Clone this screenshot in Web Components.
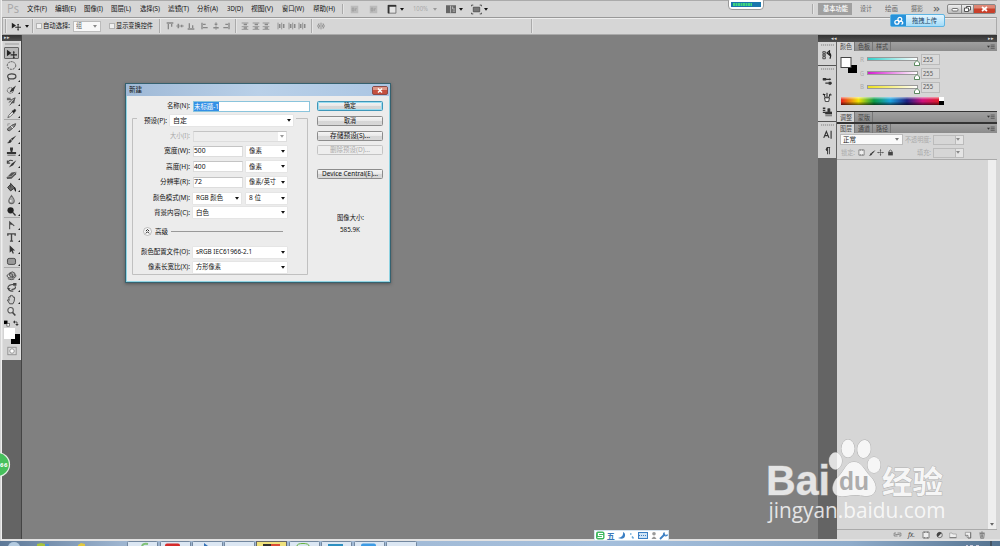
<!DOCTYPE html>
<html>
<head>
<meta charset="utf-8">
<title>Ps</title>
<style>
html,body{margin:0;width:1000px;height:546px;overflow:hidden;background:#808080}
body{font:6.4px/10px "Noto Sans","Noto Sans CJK SC",sans-serif;color:#222}
</style>
</head>
<body>
<ps-app></ps-app>
<script>
const def=(name,css,html,after)=>customElements.define(name,class extends HTMLElement{
  connectedCallback(){
    if(this.shadowRoot)return;
    this.attachShadow({mode:'open'}).innerHTML='<style>*{box-sizing:border-box}'+css+'</style>'+(typeof html==='function'?html(this):html);
    if(after)after(this);
  }
});
const G='fill="none" stroke="#444" stroke-width="1"';
const I={
 move:'<path d="M1 2v7l5-3.5z" fill="#222"/><path d="M8.5 4v7M5 7.5h7" stroke="#222" stroke-width="1.1"/><path d="M7.3 4.8l1.2-1.6 1.2 1.6zM7.3 10.2l1.2 1.6 1.2-1.6z" fill="#222"/>',
 marquee:'<ellipse cx="6" cy="6" rx="4.6" ry="4.2" '+G+' stroke-width="1.2" stroke-dasharray="2.2 1"/>',
 lasso:'<ellipse cx="6.3" cy="4.8" rx="4.5" ry="2.8" fill="none" stroke="#444" stroke-width="1.3"/><path d="M3 6.5c-1.4 1 .8 1.6 0 3.2" fill="none" stroke="#444" stroke-width="1.3"/>',
 quick:'<ellipse cx="4.8" cy="7" rx="3.4" ry="3" '+G+' stroke-dasharray="1.2 .7"/><path d="M11 1.500L6 5.3 4 8.9 8 7.5z" fill="#333"/>',
 crop:'<path d="M1 4h5l4-2-2 4-4 4M1 2.5h4M3 7l3-2" '+G+'/><path d="M5 8l5-6-1 6z" fill="#555"/>',
 eye:'<path d="M2 10.5L3 8l4-4 1.5 1.5-4 4z" fill="#eee" stroke="#444" stroke-width=".8"/><path d="M6.5 3.2l1.2-.3 1.4-1.6q2 0 1.5 1.9L9 4.8l-.3 1z" fill="#222" stroke="#222" stroke-width=".5"/>',
 heal:'<path d="M1.5 7.5l5-4q2-1 4-1.7-.4 2.6-2 4L4 9.5q-2.5.5-2.5-2z" fill="#888" stroke="#444"/><path d="M5.500 4l2.500 3" stroke="#fff"/><path d="M2 2h3M2 2v3" stroke="#888" stroke-dasharray="1 .5"/>',
 brush:'<path d="M11.3 1.500L5.4 5.2l1.4 2z" fill="#333"/><path d="M5 5.6l1.5 1.9Q5 10.7 1 9.9q2-.5 2.2-2.2Q3.8 6 5 5.6z" fill="#333"/>',
 stamp:'<path d="M4.400 1.500h3.200v2.300L7 5.600v1h4v2.200H1v-2.200h4v-1L4.400 4z" fill="#333"/><path d="M1.500 10h9" stroke="#555"/>',
 hist:'<path d="M11.300 2.500L6.400 6 3 10.300l4.800-2.300z" fill="#333"/><path d="M1.500 5.500q2-4.500 6-2.500M1.500 2.600v3h3" fill="none" stroke="#444" stroke-width="1.200"/>',
 eraser:'<path d="M1 8L6 2.800l5.300-.9-.3 2.600-5 5-5 .3z" fill="#555"/><path d="M1.600 7.400L6 7l4.700-4.600" fill="none" stroke="#ccc" stroke-width=".6"/>',
 bucket:'<path d="M5.5 2l4 4.400L5 9.700 1.800 6z" fill="#666" stroke="#333"/><path d="M9 5.300q2.500 1.500 1.900 5.200-1.300-.2-2.100-3z" fill="#222"/><path d="M5 6V1" fill="none" stroke="#444"/>',
 blur:'<path d="M6 1.600Q9.300 6 9 7.700A3 2.800 0 013 7.700Q2.800 6 6 1.600z" fill="#aaa" stroke="#666" stroke-width="1.100"/><circle cx="5.200" cy="7.500" r="1" fill="#eee"/>',
 dodge:'<circle cx="5" cy="4.700" r="3.400" fill="#222"/><path d="M7 6.700l3.400 3.700" stroke="#333" stroke-width="1.500"/>',
 pen:'<path d="M4 10V2l5 4.500M4 2.200l1.800 3.200" fill="none" stroke="#444" stroke-width="1.100"/>',
 type:'<path d="M2 4V2h8v2M6 2v8M4.300 10h3.400" fill="none" stroke="#444" stroke-width="1.500"/>',
 arrow:'<path d="M4 1.300v8.200l2-1.800 1.400 3 1.200-.7-1.300-2.800h2.600z" fill="#333"/>',
 rect:'<rect x="1.600" y="2.600" width="8.800" height="6.600" rx="1.800" fill="#999" stroke="#444"/>',
 rot:'<ellipse cx="6" cy="6.400" rx="4.800" ry="2.300" '+G+'/><path d="M4 3.300l3-1.300 2.600 1.400v3L7 8 4 6.500zM4 3.300l3 1.400v3" fill="#aaa" stroke="#444" stroke-width=".9"/><path d="M2 9.500q4 2 7 .2" '+G+'/>',
 cam:'<path d="M2 6q1-3.600 7-3.200M9.800 4.700q2 3-3.800 3.500M2 6.500q1 4 6 3.400" fill="none" stroke="#444" stroke-width="1.200"/><path d="M7.800 1h3.600v3H7.800zM1 6l4 1-2 2z" fill="#444"/>',
 hand:'<path d="M4 10.700L1.500 6.600q.6-1.200 2 .4L3 3.300q.7-1 1.500.3l.4-1.900q.9-.9 1.300.2L7.500 2l.6 1.700q1.400-.9 1.300.7-.1 3.800-1.800 6.300z" fill="#ccc" stroke="#444"/>',
 zoom:'<circle cx="5" cy="4.700" r="3" fill="#ddd" stroke="#555" stroke-width="1.200"/><path d="M7.200 7l3 3.300" stroke="#444" stroke-width="1.700"/>',
 mini:'<rect x="0" y="1" width="6" height="6" fill="#000"/><rect x="5" y="6" width="4.500" height="4.500" fill="#fff" stroke="#333"/>',
 swap:'<path d="M2 4h6v5" fill="none" stroke="#333" stroke-width="1.500"/><path d="M0 4l4-3.500v7zM8 12l-3.500-4h7z" fill="#333"/>',
 mask:'<rect x="1" y="1.500" width="10" height="9" fill="#ddd" stroke="#888"/><circle cx="6" cy="6" r="2.700" fill="#fff" stroke="#888"/>',
 br:'<path d="M1 1h10v10H1z" fill="#bbb"/><path d="M3 8V4h2v4H3M7 8V5h2" fill="none" stroke="#999"/>',
 lay:'<path d="M1.300 11V1.500h9.400V11z" fill="#e4e4e4" stroke="#666"/><path d="M1 2.200h10M2 2v9" stroke="#333" stroke-width="2"/>',
 docs:'<path d="M0 1.500h12v9.500H0z" fill="#666"/><path d="M5.500 2v8.500M8 3v3h3M8 8.500h3" stroke="#ccc" fill="none"/>',
 full:'<path d="M2.500 3.500h7v5h-7z" fill="#777" stroke="#444" stroke-width=".8"/><path d="M.5 2.500V1.200h2M9.500 1.200h2v1.300M.5 9.500v1.300h2M9.500 10.800h2V9.500" '+G+'/>',
 at:'<path d="M1 1.500h10M3.500 3v8M8.500 3v4" stroke="#888" stroke-width="2" fill="none"/>',
 am:'<path d="M0 6h12" stroke="#888"/><path d="M3.500 2.500v7M8.500 4v4" stroke="#888" stroke-width="2.400"/>',
 ab:'<path d="M1 10.500h10M3.500 2v7M8.500 5v4" stroke="#888" stroke-width="2"/>',
 al:'<path d="M1.500 1v10M3 3.500h4M3 8.500h7" stroke="#888" stroke-width="2"/>',
 ac:'<path d="M6 0v12" stroke="#888"/><path d="M4 3.500h4M2 8.500h8" stroke="#888" stroke-width="2.300"/>',
 ar:'<path d="M10.500 1v10M5 3.500h4M2 8.500h7" stroke="#888" stroke-width="2"/>',
 dv:'<path d="M1 1.500h10M1 7h10M1 11h10" stroke="#888" stroke-width="1.200"/><path d="M4 3.800h5M4 9h5" stroke="#888" stroke-width="2"/>',
 dh:'<path d="M1.500 1v10M7 1v10" stroke="#888" stroke-width="1.200"/><path d="M4 3v6M10 3v6" stroke="#888" stroke-width="2.400"/>',
 auto:'<path d="M6 1v10M3 2q-4 4 0 8M9 2q4 4 0 8M3.500 4v4M8.500 4v4" fill="none" stroke="#888" stroke-width="1.300"/>',
 dhist:'<path d="M1 2h3v2H1zM1 5h3v2H1zM1 8h3v2.500H1z" fill="none" stroke="#333"/><path d="M6 3.500L9 1v5zM8 3.500q4 1 1.500 7" fill="none" stroke="#222" stroke-width="1.400"/>',
 dbr:'<path d="M1 4h9M4 8.500h8" stroke="#333" stroke-width="1.300"/><path d="M1 2.500h4v3H1zM8 7h3v3.500H8zM9 2.500l2 1.500-2 1.500z" fill="#333"/>',
 dcl:'<path d="M3 7h6l-1 4.500H4z" fill="#eee" stroke="#222"/><path d="M4 7L2 2M6 7V1M8 7l2-5M1 3h3M8.500 3.500h3" stroke="#222" stroke-width="1.200"/>',
 dst:'<path d="M1 1.500h3M1 4h3M1 6.500h3" stroke="#333" stroke-width="1.600"/><path d="M7 2h2.500v4H12v2.500H4V6h3zM4 10.500h8" fill="#333" stroke="#333" stroke-width=".8"/>',
 chara:'<path d="M1 10.500L4.500 2l3.500 8.500M2.500 7.500h4M10.800 1v10.500" fill="none" stroke="#333" stroke-width="1.500"/>',
 para:'<path d="M6 1.500A2.800 2.800 0 006 7z" fill="#333"/><path d="M6 1.800V11M8.500 1.800V11M5 2h4.500" stroke="#333" stroke-width="1.200" fill="none"/>',
 ltr:'<path d="M1.500 1.500h9v9h-9z" fill="#eee" stroke="#555"/><path d="M4 1v2M8 1v2M4 9v2M8 9v2" stroke="#555"/>',
 cross:'<path d="M6 1v10M1 6h10" stroke="#444"/><path d="M4.500 2.500L6 .5l1.500 2zM4.500 9.500l1.500 2 1.500-2zM2.500 4.500L.5 6l2 1.500zM9.500 4.500l2 1.500-2 1.500z" fill="#444"/>',
 lock:'<path d="M2 5h8v6H2z" fill="#444"/><path d="M3.500 5V3.500q2.500-3.500 5 0V5" fill="none" stroke="#444" stroke-width="1.300"/>',
 link:'<path d="M4 4H1.500v4H6M6 4h4.500v4H8M3 6h6" fill="none" stroke="#777"/>',
 adj:'<circle cx="5.500" cy="6" r="4" fill="#ddd" stroke="#444"/><path d="M8.500 3A4 4 0 002.700 9z" fill="#444"/>',
 folder:'<path d="M1 10V3h3.500l1 1.500H11V10z" fill="#eee" stroke="#999"/><path d="M1 10h10" stroke="#555"/>',
 page:'<path d="M2 2h8v8.500H6L2 7z" fill="#eee" stroke="#888"/><path d="M6 10V6.500H2M10 2v8.500H6" fill="none" stroke="#555"/>',
 bin:'<path d="M3 4h6.500l-1 7H4z" fill="#ddd" stroke="#666"/><path d="M2 3h8M5 1.500h2M5.500 5v5M7 5v5" stroke="#555"/>',
 adv:'<circle cx="6" cy="6" r="5.300" fill="#f8f8f8" stroke="#999" stroke-width=".8"/><path d="M3.800 5.500L6 3.300l2.200 2.200M3.800 8.500L6 6.300l2.200 2.200" fill="none" stroke="#222" stroke-width="1.300"/>',
 menu:'<path d="M0 4h4.500L2.200 7z" fill="#333"/><path d="M5.500 3h6M5.500 5.500h6M5.500 8h6" stroke="#444"/>',
 cloud:'<ellipse cx="3.500" cy="7.500" rx="2.500" ry="2.300" fill="none" stroke="#fff" stroke-width="1.500"/><circle cx="7" cy="4" r="2.300" fill="none" stroke="#fff" stroke-width="1.500"/><path d="M5.500 7.500q3-2.500 4.500-.5t-1 3" fill="none" stroke="#fff" stroke-width="1.500"/>'
};
def('ps-icon',':host{display:block;flex:none}svg{display:block;width:100%;height:100%}',e=>{
  const s=e.getAttribute('s')||9;e.style.width=e.style.height=s+'px';
  return `<svg viewBox="0 0 12 12">${I[e.getAttribute('n')]}</svg>`});
/* Label with its text squeezed or stretched to the width w */
def('ps-text',':host{display:block;flex:none;white-space:nowrap;line-height:10px}span{display:inline-block;transform-origin:0 50%}','<span><slot></slot></span>',e=>{
  const w=+e.getAttribute('w'),s=e.shadowRoot.querySelector('span');
  s.textContent=e.textContent;
  if(w){e.style.width=w+'px';const r=s.getBoundingClientRect().width;if(r)s.style.transform=`scaleX(${w/r})`}});
def('ps-caret',':host{display:block;flex:none;width:4px;height:3px}svg{display:block}','<svg width="4" height="3"><path d="M0 0h4L2 2.700z" style="fill:var(--c,#111)"/></svg>');
def('ps-sep',':host{display:block;flex:none;width:1px;height:var(--h,12px);background:#aaa;box-shadow:1px 0 #e4e4e4}','');
def('ps-check',':host{display:block;flex:none;width:6px;height:6px;background:#f0f0f0;border:1px solid #b4b4b4;box-sizing:border-box}','');
/* A line of items, each preceded by its gap */
const gap=n=>`<i style="flex:none;width:${n}px"></i>`;
const line=a=>{let x=a.shift(),h='';for(const [p,w,m] of a){h+=gap(p-x)+m;x=p+w}return h};
const T=(p,w,t,st='')=>[p,w,`<ps-text w="${w}" style="${st}">${t}</ps-text>`];
const C=(p,c='#111')=>[p-2,4,`<ps-caret style="--c:${c}"></ps-caret>`];
const S=(p,h=12)=>[p,1,`<ps-sep style="--h:${h}px"></ps-sep>`];
const N=(p,s,n,st='')=>[p,s,`<ps-icon n="${n}" s="${s}" style="${st}"></ps-icon>`];

def('ps-window-buttons',`:host{display:flex;flex:none;width:49px;height:10px;border:1px solid #888;border-radius:2px;background:linear-gradient(#eee,#bbb);overflow:hidden;box-sizing:border-box}
svg{display:block}`,`<svg width="47" height="8" viewBox="0 0 47 8"><path d="M26 0h21v8H26z" fill="#c9402b"/><path d="M26 0h21v3.500H26z" fill="#de8775"/><path d="M13.500 0v8M25.500 0v8" stroke="#888"/><rect x="4" y="3.500" width="6" height="2.500" rx="1" fill="#fff" stroke="#555" stroke-width=".8"/><path d="M18.500 3V1.500h4v3.500h-1.500M16.500 3h4v3.500h-4z" fill="#fff" stroke="#444" stroke-width=".9"/><path d="M34 2l5 4M39 2l-5 4" stroke="#fff" stroke-width="1.700"/></svg>`);
def('ps-menubar',':host{display:flex;align-items:center;height:17px;background:#d6d6d6;border-top:1px solid #aaa;box-sizing:border-box;color:#111}b{display:flex;align-items:center;justify-content:center;width:34px;height:12px;background:#a0a0a0;color:#fff;font-weight:500;flex:none}',
 line([2,T(7,12,'Ps','color:#aaa;font-size:12px;line-height:14px'),
 T(27,20,'文件(F)'),T(55,21,'编辑(E)'),T(84,19,'图像(I)'),T(111,20,'图层(L)'),T(140,20,'选择(S)'),T(168,21,'滤镜(T)'),T(197,21,'分析(A)'),T(227,16,'3D(D)'),T(251,22,'视图(V)'),T(282,22,'窗口(W)'),T(313,22,'帮助(H)'),
 S(342,10),N(350,9,'br'),N(369,9,'br'),N(387,10,'lay'),C(402),T(413,15,'100%','color:#aaa'),C(435,'#999'),N(446,10,'docs'),C(461),N(471,11,'full'),C(486),
 S(812,10),[818,34,'<b><ps-text w="25">基本功能</ps-text></b>'],T(860,12,'设计','color:#666'),T(885,13,'绘画','color:#666'),T(911,12,'摄影','color:#666'),T(933,7,'»','color:#666;font-size:11px;margin-top:-2px'),[947,49,'<ps-window-buttons></ps-window-buttons>']]));
def('ps-options',':host{display:flex;align-items:center;height:18px;background:#d6d6d6;border:1px solid #aaa;border-top-color:#999;box-shadow:inset 0 1px #eee;box-sizing:border-box;color:#111}b{display:flex;align-items:center;justify-content:space-between;width:28px;height:11px;background:#f8f8f8;border:1px solid #bbb;padding:0 3px 0 2px;font-weight:400;color:#666;flex:none}',
 line([3,S(5,14),N(11,10,'move'),C(26.5),S(32,14),[36,6,'<ps-check></ps-check>'],T(43,27,'自动选择:'),[72.5,28,'<b><ps-text w="6">组</ps-text><ps-caret style="--c:#888"></ps-caret></b>'],[108.5,6,'<ps-check></ps-check>'],T(116,37,'显示变换控件'),S(159,14),
 N(165.5,8,'at'),N(176,8,'am'),N(187,8,'ab'),N(201,8,'al'),N(211.500,8,'ac'),N(222,8,'ar'),S(235,14),N(241,8,'dv'),N(252,8,'dv'),N(262,8,'dv'),N(277,8,'dh'),N(287.500,8,'dh'),N(298,8,'dh'),S(311,14),N(317,8,'auto'),S(531,14)]));
def('ps-toolbox',`:host{display:flex;flex-direction:column;width:20px;background:#646464;border-right:1px solid #444;box-sizing:border-box}
header{height:6px;background:linear-gradient(#333,#505050);color:#ddd;font-size:5px;line-height:5px;padding-left:2px}
main{display:flex;flex-direction:column;align-items:center;height:319px;background:#d4d4d4;border:1px solid #e0e0e0;border-width:0 1px}
.g{width:14px;height:2px;background:#b8b8b8;margin:2px 0 2px}
.t{position:relative;width:16px;height:12px;display:flex;justify-content:center;align-items:center;flex:none}
.t.s{background:#b8b8b8;border:1px solid #666;border-radius:1px;width:15px}
.t:not(.n):after{content:"";position:absolute;right:0;bottom:1px;border:1px solid #222;border-top-color:transparent;border-left-color:transparent}
hr{flex:none;width:16px;height:1px;margin:0 0 1px;border:0;background:#aaa}
.m{display:flex;height:10px;gap:2px;align-items:center;flex:none;margin:1px 0 0}
svg{display:block;flex:none}`,
 '<header>▸▸</header><main><div class="g"></div>'+
 [['move','marquee','lasso','quick','crop','eye'],['heal','brush','stamp','hist','eraser','bucket','blur','dodge'],['pen','type','arrow','rect'],['rot','cam','hand','zoom']].map(g=>g.map(n=>`<div class="t ${n=='move'?'s':''} ${n=='zoom'||n=='move'?'n':''}"><ps-icon n="${n}" s="11"></ps-icon></div>`).join('')).join('<hr>')+
 '<div class="m"><ps-icon n="mini" s="7"></ps-icon><ps-icon n="swap" s="6"></ps-icon></div><svg width="16" height="16"><path d="M7 6h9v10H7z" fill="#000"/><path d="M0 0h11v11H0z" fill="#fff"/></svg><div class="t n" style="margin-top:1px"><ps-icon n="mask" s="10"></ps-icon></div></main>');
def('ps-dock',`:host{display:flex;flex-direction:column;width:19px;background:#646464;flex:none}
div{height:116px;background:#d4d4d4;display:flex;flex-direction:column;align-items:center;width:18px}
i{flex:none;width:13px;height:2px;background:repeating-linear-gradient(90deg,#aaa 0 1px,#ccc 1px 2px)}
hr{flex:none;width:18px;height:2px;border:0;background:#555;margin:0}
ps-icon{flex:none}`,
 '<div><i style="margin-top:2px"></i><ps-icon n="dhist" s="10" style="margin:4px 0 5px"></ps-icon><hr style="height:1px;margin-bottom:2px"><i style="margin-bottom:6px"></i><ps-icon n="dbr" s="10" style="margin-bottom:6px"></ps-icon><ps-icon n="dcl" s="10" style="margin-bottom:5px"></ps-icon><ps-icon n="dst" s="10" style="margin-bottom:4px"></ps-icon><hr style="height:1px"><i style="margin:2px 0 4px"></i><ps-icon n="chara" s="9" style="margin-bottom:7px"></ps-icon><ps-icon n="para" s="9"></ps-icon></div>');
def('ps-tabs',`:host{display:flex;height:9px;background:linear-gradient(#a0a0a0,#8c8c8c);color:#444;flex:none}
b{width:18px;font-weight:400;display:flex;justify-content:center;align-items:center;border-right:1px solid #777;box-sizing:border-box}
b:first-of-type{background:#d6d6d6}em{flex:1}ps-icon{margin:1px 2px 0 0}`,
 e=>e.getAttribute('t').split(',').map(t=>`<b><ps-text w="12" style="line-height:9px">${t}</ps-text></b>`).join('')+'<em></em><ps-icon n="menu" s="8"></ps-icon>');
def('ps-color',`:host{display:flex;height:60px;background:#d6d6d6;flex:none;flex-direction:column}
section{display:flex;height:47px}
svg{display:block;flex:none}
.sw{margin:6px 0 0 3px}
.r{padding-top:2px}
.c{display:flex;align-items:center;height:13.700px}
.bar{position:relative;width:51px;height:4px;border:1px solid #999;margin:-1px 0 0 3px;background:linear-gradient(90deg,var(--a),#fff)}
.bar svg{position:absolute;right:-3px;top:2px}
.v{width:19px;height:11px;border:1px solid #bbb;background:#dadada;display:flex;align-items:center;padding-left:1px;margin-left:3px}
.sp{display:flex;width:103px;height:7.500px;margin:-1px 0 0 4px;background:linear-gradient(#fff9,#fff0 35%,#0000 55%,#0009),linear-gradient(90deg,#e8201c,#f3e500 17%,#0a9a43 32%,#1aa2df 48%,#1d2080 64%,#d0107c 79%,#e31b23 96%)}
.sp i{margin-left:auto;width:5px;background:linear-gradient(#fff 50%,#000 50%)}`,
 '<section><svg class="sw" width="17" height="17"><path d="M8 8h9v8H8z" fill="#000"/><rect x="1" y="0.500" width="10" height="10" fill="#fff" stroke="#444"/></svg><div class="r">'+
 [['R','#30d0cc'],['G','#d31ccf'],['B','#efe21a']].map(([l,c])=>`<div class="c"><ps-text w="4" style="color:#aaa;margin-left:3px">${l}</ps-text><div class="bar" style="--a:${c}"><svg width="6" height="6"><path d="M3 .5L5.500 3v2.500H.5V3z" fill="#fff" stroke="#33703a" stroke-width=".8"/></svg></div><div class="v"><ps-text w="10" style="color:#555">255</ps-text></div></div>`).join('')+
 '</div></section><div class="sp"><i></i></div>');
def('ps-layers',`:host{display:flex;flex-direction:column;flex:1;background:#d6d6d6;min-height:0}
.a{display:flex;align-items:center;height:14px;flex:none}
.b{display:flex;align-items:center;height:13px;flex:none;border-bottom:1px solid #aaa}
.s{display:flex;align-items:center;justify-content:space-between;width:63px;height:11px;background:#fafafa;border:1px solid #bbb;padding:0 3px 0 2px;flex:none}
.f{display:flex;align-items:center;justify-content:flex-end;width:31px;height:10px;border:1px solid #bbb;flex:none;padding-right:3px;background:linear-gradient(90deg,#d6d6d6 21px,#bbb 21px 22px,#e4e4e4 22px)}
.l{flex:1;display:flex;justify-content:flex-end}
.sb{width:8px;background:#eee;display:flex;align-items:flex-end;justify-content:center;padding-bottom:3px;margin-right:1px}
.k{height:10px;flex:none;border-top:1px solid #aaa;display:flex;align-items:center}`,
 `<div class="a">${line([837,[839.5,63,'<div class="s"><ps-text w="13">正常</ps-text><ps-caret style="--c:#777"></ps-caret></div>'],T(905,26,'不透明度:','color:#aaa'),[932.500,31,'<div class="f"><ps-caret style="--c:#888"></ps-caret></div>']])}</div>
 <div class="b">${line([837,T(841,14,'锁定:','color:#aaa'),N(858,7,'ltr'),N(867.500,8,'brush'),N(877,7,'cross'),N(886.500,7,'lock'),T(917,14,'填充:','color:#aaa'),[932.500,31,'<div class="f"><ps-caret style="--c:#888"></ps-caret></div>']])}</div>
 <div class="l"><div class="sb"><ps-caret style="--c:#666"></ps-caret></div></div>
 <div class="k">${line([837,N(892.500,9,'link'),[908,7,'<ps-text w="7" style="font-style:italic;font-size:7px;color:#444">fx.</ps-text>'],N(922,8,'ltr'),N(936,8,'adj'),N(949,8,'folder'),N(964,8,'page'),N(978,8,'bin')])}</div>`);
def('ps-panels',`:host{display:flex;width:160px;flex-direction:column}hr{margin:0;border:0;background:#333;height:2px;flex:none}`,
 '<ps-tabs t="颜色,色板,样式"></ps-tabs><ps-color></ps-color><hr style="height:1px"><ps-tabs t="调整,蒙版" style="height:10px"></ps-tabs><hr style="height:1.500px"><ps-tabs t="图层,通道,路径"></ps-tabs><ps-layers></ps-layers>');
def('ps-select',`:host{display:flex;align-items:center;justify-content:space-between;box-sizing:border-box;height:11px;background:#fff;padding:0 2px 0 3px;flex:none;box-shadow:0 0 0 .5px #ddd}`,'<slot></slot><ps-caret></ps-caret>');
def('ps-input',`:host{display:flex;align-items:center;box-sizing:border-box;height:11px;background:#fff;padding:0;flex:none;border:1px solid #ddd;border-top-color:#c4c4c4}`,'<slot></slot>');
def('ps-button',`:host{display:flex;align-items:center;justify-content:center;box-sizing:border-box;width:66px;height:10px;border:1px solid #8c8c8c;border-radius:1.500px;background:linear-gradient(#f4f4f4,#e8e8e8 50%,#d6d6d6 50%,#d8d8d8);flex:none}:host([d]){color:#aaa;border-color:#c4c4c4;background:#eee}:host([p]){border-color:#3f97b9;box-shadow:inset 0 0 0 1px #9adcf0}`,'<slot></slot>');
const R=(m,lw,l,body,c='')=>`<div class="r" style="margin-top:${m}px;${c}"><div class="lb"><ps-text w="${lw}">${l}</ps-text></div>${body}</div>`;
const sel=(w,tw,t,st='')=>`<ps-select style="width:${w}px;${st}"><ps-text w="${tw}">${t}</ps-text></ps-select>`;
const inp=(w,tw,t)=>`<ps-input style="width:${w}px"><ps-text w="${tw}">${t}</ps-text></ps-input>`;
def('ps-dialog',`:host{position:absolute;left:125px;top:83px;width:266px;height:200px;background:#ececec;border:1px solid #35616f;box-shadow:inset 0 0 0 1px #8fd3e2,0 1px 3px #3338;display:flex;flex-direction:column;box-sizing:border-box;color:#111}
header{height:12px;background:linear-gradient(90deg,#9fb9d6,#b9d0e8 50%,#abc6e3);display:flex;align-items:center;justify-content:space-between;padding:0 2px 0 3px;flex:none}
header svg{display:block}
section{display:flex;position:relative}
.f{width:185px;height:186px}
.r{display:flex;align-items:center;height:12px;gap:3px}
.lb{width:63.500px;display:flex;justify-content:flex-end;flex:none}
.fr{position:absolute;left:6px;top:22px;pointer-events:none}
.b{width:66px;margin:5px 0 0 6px;display:flex;flex-direction:column;align-items:center}
mark{background:#3390e6;color:#fff;display:block;height:9px;line-height:9px}mark ps-text{line-height:9px}
hr{width:112px;height:1px;background:#999;border:0;margin:0}`,
 `<header><ps-text w="13">新建</ps-text><svg width="16" height="9"><rect x=".5" y=".5" width="15" height="8" rx="1.500" fill="#c5503f" stroke="#8a4a48"/><path d="M1 1h14v3H1z" fill="#dd9788"/><path d="M6 2.500l4 4M10 2.500l-4 4" stroke="#fff" stroke-width="1.500"/></svg></header>
 <section><svg class="fr" width="177" height="158"><path d="M5 .5H.5v156h175V.5H164" fill="none" stroke="#c0c0c0"/></svg><div class="f">`+
 R(4,23,'名称(N):','<ps-input style="width:117px;border-color:#8ac4dc"><mark><ps-text w="25">未标题-1</ps-text></mark></ps-input>')+
 `<div class="r" style="margin-top:2.500px"><div class="lb" style="width:41px"><ps-text w="23">预设(P):</ps-text></div>${sel(123,14,'自定')}</div>`+
 R(3.500,20,'大小(I):','<ps-input style="width:94px;background:linear-gradient(90deg,#eee 84px,#fff 84px);justify-content:flex-end;padding-right:2px"><ps-caret style="--c:#999"></ps-caret></ps-input>','color:#aaa')+
 R(3,26,'宽度(W):',inp(50,11.500,'500')+sel(41,13,'像素'))+
 R(3.500,24,'高度(H):',inp(50,11.500,'400')+sel(41,13,'像素'))+
 R(3.500,30,'分辨率(R):',inp(50,8,'72')+sel(41,27,'像素/英寸'))+
 R(4,37,'颜色模式(M):',sel(48,27,'RGB 颜色')+sel(41,12,'8 位','margin-left:2px'))+
 R(2.500,36,'背景内容(C):',sel(94,13,'白色'))+
 '<div class="r" style="margin-top:7px;padding-left:17px"><ps-icon n="adv" s="9"></ps-icon><ps-text w="13">高级</ps-text><hr></div>'+
 R(8.500,49,'颜色配置文件(O):',sel(94,56,'sRGB IEC61966-2.1'))+
 R(3,42,'像素长宽比(X):',sel(94,25,'方形像素'))+
 `</div><div class="b"><ps-button p><ps-text w="12">确定</ps-text></ps-button><ps-button style="margin-top:5px"><ps-text w="12">取消</ps-text></ps-button><ps-button style="margin-top:4.500px"><ps-text w="40">存储预设(S)...</ps-text></ps-button><ps-button d style="margin-top:4.500px"><ps-text w="40">删除预设(D)...</ps-text></ps-button><ps-button style="margin-top:14px"><ps-text w="56">Device Central(E)...</ps-text></ps-button><ps-text w="27" style="margin-top:33.500px">图像大小:</ps-text><ps-text w="20" style="margin-top:2.500px">585.9K</ps-text></div></section>`);
def('ps-taskbar',`:host{display:flex;height:5px;background:linear-gradient(90deg,#5d7897,#9db4cf 12%,#a5bfdc 60%,#8faccb 85%,#54728f);overflow:hidden;position:relative}svg{display:block}`,
 '<svg width="1000" height="5"><ellipse cx="14" cy="6" rx="6" ry="5" fill="#b4cbe0"/><path d="M37 3l4-1 4 1v2h-8z" fill="#a9c43d"/><path d="M45 3h4v2h-4z" fill="#4f8fd0"/><path d="M78 4l3-2 4 1v2h-7z" fill="#e3c93e"/>'+
 [127,160,192,224,289,321,354,386].map(x=>`<rect x="${x}.5" y=".5" width="30" height="8" rx="1" fill="#dce7f3" stroke="#7388a0"/>`).join('')+
 '<rect x="256.500" y=".5" width="30" height="8" fill="#efe17c" stroke="#666"/><path d="M263 3h16v2h-16z" fill="#33302c"/><path d="M271 3h9v2h-9z" fill="#db4b35"/><rect x="165" y="2.500" width="15" height="6" rx="2" fill="#d52b2b"/><path d="M297 5q0-2.500 6-2.500t6 2.500" fill="none" stroke="#63b23c"/><path d="M328 3h15v2h-15z" fill="#2d8fc0"/><rect x="361" y="2.500" width="15" height="6" rx="2" fill="#3e9be4"/><path d="M142 5q1-3 6-2" fill="none" stroke="#7fc077" stroke-width="2"/><path d="M204 2l4 3h-4z" fill="#3370b6"/><path d="M966 4.500h2m2 0h3m3 0h3" stroke="#ccd" /><path d="M991 0v5" stroke="#333"/></svg>');
def('ps-float',`:host{position:absolute;display:flex;align-items:center;box-sizing:border-box}`,'<slot></slot>');
def('ps-watermark',`:host{position:absolute;left:764px;top:434px;width:186px;height:94px;opacity:.8}svg{display:block;overflow:visible}.u{font-family:"Liberation Sans",sans-serif}.c{font-family:"Noto Sans CJK SC",sans-serif}.s{font-family:"Open Sans",sans-serif}`,
 `<svg width="186" height="94" fill="#fff"><g stroke="#aaa" stroke-width="1" paint-order="stroke"><text class="u" x="2" y="61" font-size="42" font-weight="700" textLength="64" lengthAdjust="spacingAndGlyphs">Bai</text><ellipse cx="71.500" cy="27" rx="6.500" ry="8.500"/><ellipse cx="84" cy="14.500" rx="6.500" ry="9"/><ellipse cx="100" cy="15" rx="6.700" ry="9" transform="rotate(8 100 15)"/><ellipse cx="110" cy="31" rx="6.500" ry="8"/><path d="M90 28c8 0 10 8 16 14 9 9 7 20-3 20-6 0-7-1-13-1s-8 2-14 1c-10-1-9-13-1-20 6-6 7-14 15-14z"/><text class="c" x="118" y="59" font-size="31" font-weight="700" textLength="61" lengthAdjust="spacingAndGlyphs">经验</text></g><text class="u" x="75" y="56" font-size="25" font-weight="700" fill="#a4a4a4" textLength="30" lengthAdjust="spacingAndGlyphs">du</text><text class="s" x="4.500" y="84" font-size="22" textLength="177" lengthAdjust="spacingAndGlyphs">jingyan.baidu.com</text></svg>`);
def('ps-app',`:host{display:flex;flex-direction:column;position:relative;width:1000px;height:546px;background:#d6d6d6;overflow:hidden}
.w{height:541px;border:1px solid #efefef;border-width:0 0 1px 1px;margin-left:1px;padding-right:3px;display:flex;flex-direction:column;border-bottom:2px solid #e2e2e2}
.m{flex:1;display:flex;min-height:0}
.c{flex:1;background:#808080}
.d{width:179px;display:flex;flex-direction:column}
.h{height:7px;background:linear-gradient(#333,#505050);display:flex;justify-content:space-between;color:#ddd;font-size:5px;line-height:6px;padding:0 3px 0 13px}
.p{display:flex;flex:1;min-height:0}
.up{left:890px;top:14px;width:55px;height:13px;border:1px solid #5eb4e2;border-radius:2px;background:linear-gradient(#e4f5fe,#a2dbf8);color:#246}
.up div{width:15px;height:11px;background:#2792da;display:flex;justify-content:center;align-items:center;margin-right:6px}
.pr{left:728px;top:-3px;width:36px;height:13px;background:#fff;border:1px solid #999;border-radius:4px;padding:4px 2px 0;align-items:flex-start}
.pr svg,.ball svg{display:block}
.im{left:594px;top:530px;width:75px;height:11px;background:#fff;border:1px solid #d4e2ee}`,
 `<div class="w"><ps-menubar></ps-menubar><ps-options></ps-options><div class="m"><ps-toolbox></ps-toolbox><div class="c"></div><div class="d"><div class="h"><span>◂◂</span><span>▸▸</span></div><div class="p"><ps-dock></ps-dock><ps-panels></ps-panels></div></div></div></div><ps-taskbar></ps-taskbar>
 <ps-dialog></ps-dialog>
 <ps-float class="up"><div><ps-icon n="cloud" s="10"></ps-icon></div><ps-text w="25">拖拽上传</ps-text></ps-float>
 <ps-float class="pr"><svg width="30" height="5"><path d="M0 0h30v5H0z" fill="#1a76ad"/><path d="M2 2.500h19" stroke="#3fd67d" stroke-width="3" stroke-dasharray="2 .5"/></svg></ps-float>
 <ps-float class="ball" style="left:0;top:451px"><svg width="12" height="27"><circle cx="-2.500" cy="13.500" r="12" fill="#46c05c" stroke="#e6efe6" stroke-width="1.200"/><text x="0" y="15.500" font-size="6" font-weight="700" fill="#fff" font-family="Noto Sans" textLength="7.500">66</text></svg></ps-float>
 <ps-float class="im"><svg width="14" height="9"><rect x="1" y="0.500" width="8.500" height="8" rx="2" fill="#3fb860"/><path d="M8 2.500H3.500v2h4v2H2.500" fill="none" stroke="#fff" stroke-width="1.200"/></svg><ps-text w="8" style="color:#3a78b8;font-size:8px;margin-left:-2px;font-weight:700">五</ps-text><svg width="54" height="9" style="margin-left:0"><path d="M8 1q1 5-5 6 6 2 7-2 .5-3-2-4z" fill="#3b7fc4"/><path d="M17 5.500l1.500 2M15 3h1.500" stroke="#67a8d8" stroke-width="1.500"/><rect x="23.500" y="1.500" width="9" height="6" fill="#cfe3f5" stroke="#3b7fc4"/><path d="M24 4.500h8" stroke="#3b7fc4" stroke-dasharray="1 1"/><circle cx="39" cy="2.800" r="1.800" fill="#999"/><path d="M36.500 8q2.500-5 5 0z" fill="#999"/><path d="M45 8l5-5" stroke="#3b7fc4" stroke-width="1.800"/><path d="M49.500 1.500q-2 2 0 3t3-1" fill="none" stroke="#3b7fc4" stroke-width="1.300"/></svg></ps-float>
 <ps-watermark></ps-watermark>`);
</script>
</body>
</html>
